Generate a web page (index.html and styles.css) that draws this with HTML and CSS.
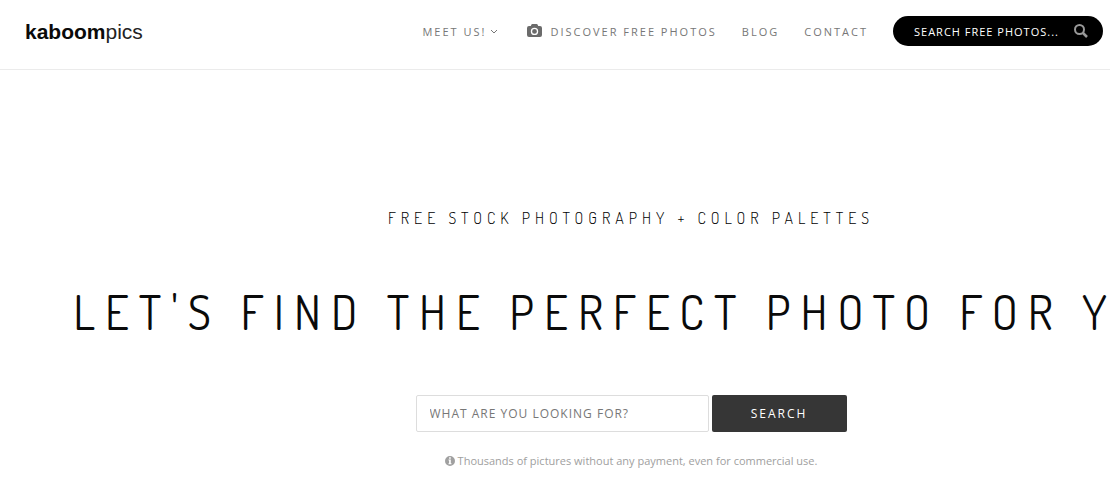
FILE: index.html
```
<!DOCTYPE html>
<html lang="en">
<head>
  <meta charset="utf-8">
  <title>Kaboompics</title>
  <link rel="stylesheet" href="styles.css">
</head>
<body>
  <header class="header">
    <a class="logo" href="#"><b>kaboom</b>pics</a>
    <nav class="nav">
      <a href="#">Meet us!
        <svg class="chevron" viewBox="0 0 8 5"><path d="M1 1l3 3 3-3" fill="none" stroke="currentColor"/></svg>
      </a>
      <a href="#">
        <svg class="camera" viewBox="0 0 15 13"><path fill="currentColor" fill-rule="evenodd" d="M5.4 0h4.2c.5 0 .9.3 1.100.7L11.200 2H13a2 2 0 0 1 2 2v7a2 2 0 0 1-2 2H2a2 2 0 0 1-2-2V4a2 2 0 0 1 2-2h1.800l.5-1.300C4.500.3 4.900 0 5.400 0zM7.500 3.700a3.700 3.700 0 1 0 0 7.400 3.700 3.700 0 0 0 0-7.400zm0 1.300a2.400 2.400 0 1 1 0 4.800 2.400 2.400 0 0 1 0-4.800z"/><circle cx="7.500" cy="7.400" r="1.500" fill="currentColor"/></svg>
        Discover free photos
      </a>
      <a href="#">Blog</a>
      <a href="#">Contact</a>
    </nav>
    <form class="quick-search">
      <input type="text" placeholder="SEARCH FREE PHOTOS..." aria-label="Search free photos">
      <button type="submit" aria-label="Search">
        <svg viewBox="0 0 14 14"><g fill="none" stroke="currentColor" stroke-width="2"><circle cx="5.500" cy="5.500" r="4.500"/><path d="M9 9l4 4" stroke-width="2.500"/></g></svg>
      </button>
    </form>
  </header>

  <main class="hero">
    <h2 class="subtitle">Free stock photography + color palettes</h2>
    <h1 class="title">Let's find the perfect photo for you</h1>
    <form class="search">
      <input type="text" placeholder="WHAT ARE YOU LOOKING FOR?" aria-label="What are you looking for?">
      <button type="submit">Search</button>
    </form>
    <p class="note">
      <svg viewBox="0 0 10 10"><path fill="currentColor" fill-rule="evenodd" d="M5 0a5 5 0 1 1 0 10A5 5 0 0 1 5 0zM4.100 1.300v1.400h1.700V1.300zM3.500 3.500v1h.6v2.800h-.6v1h3v-1h-.7V3.500z"/></svg>
      Thousands of pictures without any payment, even for commercial use.
    </p>
  </main>
</body>
</html>
```

FILE: styles.css
```
* {
  box-sizing: border-box;
}

body {
  margin: 0;
  overflow-x: hidden;
  background: #fff;
  color: #0a0a0a;
  font-family: "Open Sans", sans-serif;
}

input,
button {
  font-family: inherit;
}

/* Header */
.header {
  display: flex;
  align-items: center;
  height: 70px;
  padding: 0 7px 8px 25px;
  border-bottom: 1px solid #ebebeb;
}

.logo {
  margin-top: 2px;
  color: #222;
  font-family: "Liberation Sans", Arial, sans-serif;
  font-size: 21px;
  text-decoration: none;
}

.logo b {
  color: #0a0a0a;
}

.nav {
  display: flex;
  gap: 25px;
  margin-left: auto;
  margin-right: 25px;
  padding-top: 2px;
}

.nav a {
  display: flex;
  align-items: center;
  color: #777;
  font-size: 11px;
  line-height: 20px;
  letter-spacing: 2px;
  text-transform: uppercase;
  text-decoration: none;
  white-space: nowrap;
}

.chevron {
  width: 8px;
  height: 5px;
  margin: 0 4px;
}

.camera {
  width: 15px;
  height: 13px;
  margin-right: 8px;
  margin-bottom: 2px;
  color: #6b6b6b;
}

.quick-search {
  display: flex;
  align-items: center;
  width: 210px;
  height: 30px;
  padding: 0 15px 0 21px;
  border-radius: 15px;
  background: #000;
}

.quick-search input {
  flex: 1;
  min-width: 0;
  padding: 2px 0 0;
  border: 0;
  outline: 0;
  background: none;
  color: #fff;
  font-size: 11px;
  letter-spacing: 1px;
}

.quick-search input::placeholder {
  color: #fff;
}

.quick-search button {
  display: flex;
  padding: 0;
  border: 0;
  background: none;
  color: #999;
}

.quick-search svg {
  width: 14px;
  height: 14px;
}

/* Hero, runs past the right edge of the window */
.hero {
  display: flex;
  flex-direction: column;
  align-items: center;
  width: calc(100% + 152px);
  padding-top: 136px;
}

.subtitle,
.title {
  margin: 0;
  font-family: Dosis, Roboto, sans-serif;
  text-transform: uppercase;
  white-space: nowrap;
}

.subtitle {
  color: #000;
  font-size: 16px;
  font-weight: 300;
  line-height: 24px;
  letter-spacing: 5px;
}

.title {
  margin-top: 52px;
  font-size: 47px;
  font-weight: 400;
  line-height: 60px;
  letter-spacing: 10px;
}

.search {
  display: flex;
  gap: 3px;
  margin-top: 53px;
}

.search input {
  width: 293px;
  height: 37px;
  padding: 0 13px;
  border: 1px solid #ddd;
  border-radius: 2px;
  color: #777;
  font-size: 12px;
  letter-spacing: 1px;
}

.search input::placeholder {
  color: #777;
}

.search button {
  width: 135px;
  height: 37px;
  border: 0;
  border-radius: 2px;
  background: #363636;
  color: #fff;
  font-size: 12px;
  letter-spacing: 2px;
  text-transform: uppercase;
}

.note {
  display: flex;
  align-items: center;
  gap: 3px;
  margin: 19px 0 0;
  color: #a0a0a0;
  font-size: 11px;
  line-height: 20px;
}

.note svg {
  width: 10px;
  height: 10px;
}
```
